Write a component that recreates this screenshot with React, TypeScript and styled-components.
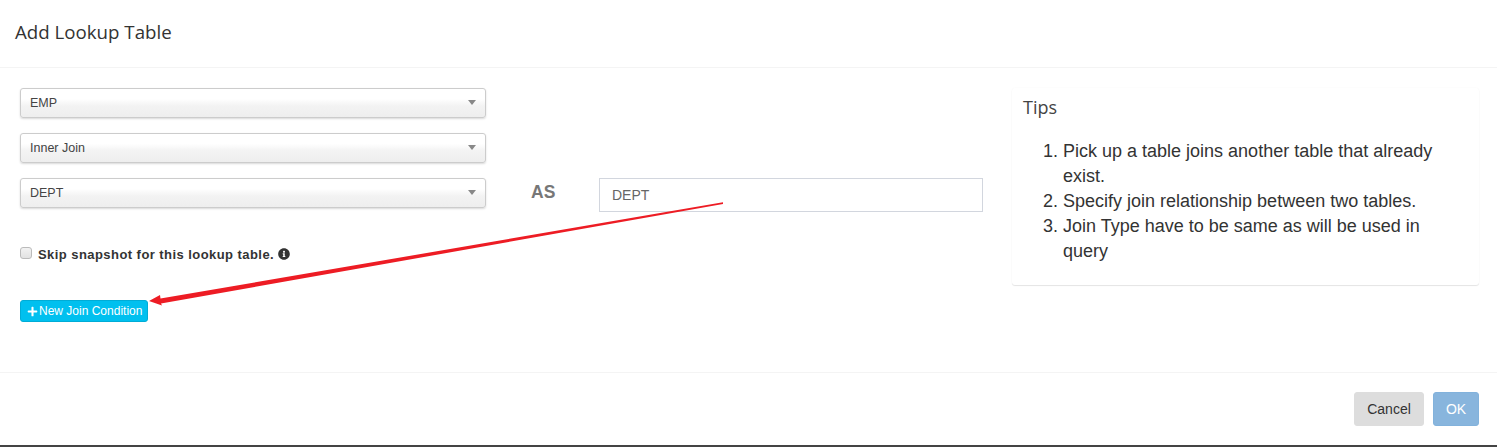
import styled, { createGlobalStyle } from 'styled-components'
import { FaInfoCircle, FaPlus } from 'react-icons/fa'

const GlobalStyle = createGlobalStyle`
  html, body {
    margin: 0;
    background: #fff;
    overflow: hidden;
  }
  * {
    box-sizing: border-box;
  }
`

const selects = ['EMP', 'Inner Join', 'DEPT']
const tips = [
  'Pick up a table joins another table that already exist.',
  'Specify join relationship between two tables.',
  'Join Type have to be same as will be used in query',
]

export default function App() {
  return (
    <Modal>
      <GlobalStyle />
      <Header>
        <Title>Add Lookup Table</Title>
      </Header>
      <Body>
        <Form>
          <FormRows>
            {selects.slice(0, 2).map((name) => (
              <SelectBox key={name}>
                {name}
                <Caret />
              </SelectBox>
            ))}
            <AliasRow>
              <SelectBox>
                DEPT
                <Caret />
              </SelectBox>
              <AsLabel>AS</AsLabel>
              <AliasInput defaultValue="DEPT" />
            </AliasRow>
          </FormRows>
          <SkipRow>
            <CheckBox />
            <SkipLabel>Skip snapshot for this lookup table.</SkipLabel>
            <FaInfoCircle size={12} color="#333" />
          </SkipRow>
          <JoinButton>
            <FaPlus size={11} />
            New Join Condition
          </JoinButton>
        </Form>
        <TipsPanel>
          <TipsTitle>Tips</TipsTitle>
          <TipsList>
            {tips.map((tip) => (
              <li key={tip}>{tip}</li>
            ))}
          </TipsList>
        </TipsPanel>
      </Body>
      <Footer>
        <CancelButton>Cancel</CancelButton>
        <OkButton>OK</OkButton>
      </Footer>
      <Annotation width="1497" height="447" viewBox="0 0 1497 447">
        <polygon
          points="723,202.2 723,204 161,303.6 162,305.5 149,301 160,295 160.5,298.6"
          fill="#ed1c24"
        />
      </Annotation>
    </Modal>
  )
}

const Modal = styled.div`
  position: relative;
  width: 1497px;
  height: 447px;
  border-bottom: 2px solid #444;
  font-family: 'Liberation Sans', Arial, sans-serif;
  color: #333;
`

const Header = styled.header`
  height: 68px;
  padding: 22px 15px 0;
  border-bottom: 1px solid #f4f4f4;
`

const Title = styled.h4`
  margin: 0;
  font-family: 'Open Sans', 'Noto Sans', sans-serif;
  font-size: 18.7px;
  font-weight: 400;
  line-height: 20px;
  color: #333;
`

const Body = styled.main`
  height: 305px;
  padding: 20px 18px 0 20px;
  border-bottom: 1px solid #f4f4f4;
  display: flex;
  justify-content: space-between;
`

const Form = styled.section`
  width: 963px;
  display: flex;
  flex-direction: column;
`

const FormRows = styled.div`
  display: flex;
  flex-direction: column;
  gap: 15px;
`

const AliasRow = styled.div`
  display: flex;
  align-items: flex-start;
`

const SelectBox = styled.div`
  position: relative;
  width: 466px;
  height: 30px;
  padding-left: 9px;
  border: 1px solid #ccc;
  border-radius: 3px;
  background: linear-gradient(to bottom, #fff 0%, #fff 35%, #f3f3f3 60%, #eee 100%);
  box-shadow: 0 1px 2px rgba(0, 0, 0, 0.15);
  font-size: 12.5px;
  line-height: 28px;
  color: #444;
`

const Caret = styled.span`
  position: absolute;
  top: 11px;
  right: 9px;
  border-style: solid;
  border-width: 5px 4px 0;
  border-color: #888 transparent transparent;
`

const AsLabel = styled.div`
  width: 113px;
  padding: 5px 0 0 45px;
  font-size: 17.5px;
  font-weight: 700;
  line-height: 19px;
  color: #777;
`

const AliasInput = styled.input`
  width: 384px;
  height: 34px;
  padding: 0 12px;
  border: 1px solid #d2d6de;
  outline: none;
  font-family: inherit;
  font-size: 14px;
  color: #666;
`

const SkipRow = styled.div`
  display: flex;
  align-items: center;
  height: 16px;
  margin-top: 34px;
`

const CheckBox = styled.span`
  width: 12px;
  height: 12px;
  margin-right: 6px;
  margin-bottom: 3px;
  border: 1px solid #bbb;
  border-radius: 3px;
  background: linear-gradient(to bottom, #f2f2f2, #e2e2e2);
`

const SkipLabel = styled.label`
  margin-right: 4px;
  font-size: 13px;
  font-weight: 700;
  letter-spacing: 0.44px;
  color: #333;
`

const JoinButton = styled.button`
  display: flex;
  align-items: center;
  gap: 1px;
  width: 128px;
  height: 22px;
  margin-top: 38px;
  padding: 0 0 0 6px;
  border: 1px solid #00acd6;
  border-radius: 3px;
  background: #00c0ef;
  color: #fff;
  font-family: inherit;
  font-size: 12px;
  line-height: 18px;
  white-space: nowrap;

  svg {
    flex-shrink: 0;
  }
`

const TipsPanel = styled.aside`
  width: 467px;
  height: 197px;
  padding: 9px 11px 0;
  border-radius: 3px;
  background: #fff;
  box-shadow: 0 1px 1px rgba(0, 0, 0, 0.1), 0 0 2px rgba(0, 0, 0, 0.03);
`

const TipsTitle = styled.h3`
  margin: 0;
  font-family: 'Open Sans', 'Noto Sans', sans-serif;
  font-size: 18px;
  font-weight: 400;
  line-height: 20px;
  color: #444;
`

const TipsList = styled.ol`
  margin: 22px 0 0;
  padding: 0 25px 0 40px;
  font-size: 18px;
  line-height: 25px;
  color: #333;
`

const Footer = styled.footer`
  display: flex;
  justify-content: flex-end;
  gap: 9px;
  padding: 19px 18px 0 0;
`

const CancelButton = styled.button`
  width: 70px;
  height: 34px;
  border: 1px solid #ddd;
  border-radius: 3px;
  background: #ddd;
  color: #333;
  font-family: inherit;
  font-size: 14px;
`

const OkButton = styled.button`
  width: 46px;
  height: 34px;
  border: 1px solid #82b2dc;
  border-radius: 3px;
  background: #88b5dd;
  color: #fff;
  font-family: inherit;
  font-size: 14px;
`

const Annotation = styled.svg`
  position: absolute;
  inset: 0;
  pointer-events: none;
`
